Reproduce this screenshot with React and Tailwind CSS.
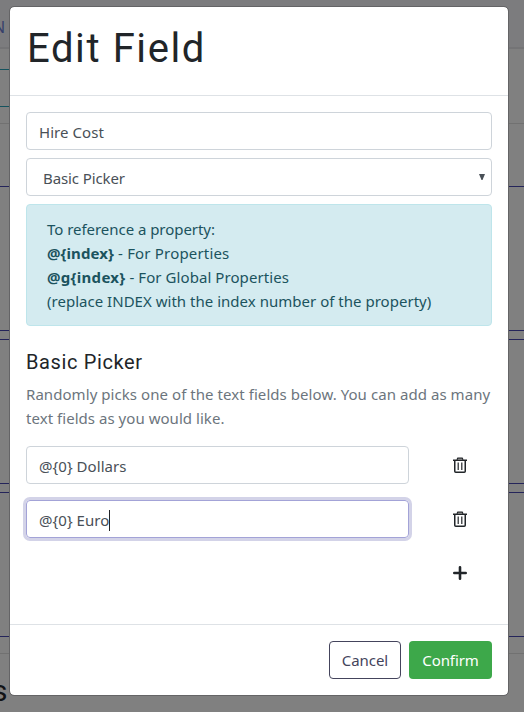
import React from "react";

const body = "font-['Noto_Sans','Open_Sans',sans-serif]";
const head = "font-['Roboto',sans-serif]";

function Rule({ gap, color }) {
  return (
    <>
      <div className={`shrink-0 ${gap}`} />
      <div className={`h-px shrink-0 ${color}`} />
    </>
  );
}

function Backdrop() {
  return (
    <div className="flex h-[712px] w-[524px] flex-col overflow-hidden bg-[#808080]">
      <div className="flex h-[49px] shrink-0 items-start border-b-2 border-[#747476] bg-[#7c7c7e] pt-[18px]">
        <span className={`${body} -ml-[7px] text-[16px] leading-[18px] text-[#36406b]`}>N</span>
      </div>
      <Rule gap="h-[20px]" color="w-[20px] bg-[#15535e]" />
      <Rule gap="h-[36px]" color="w-[20px] bg-[#15535e]" />
      <Rule gap="h-[16px]" color="bg-[#717171]" />
      <Rule gap="h-[62px]" color="bg-[#24245a]" />
      <Rule gap="h-[143px]" color="bg-[#24245a]" />
      <Rule gap="h-[8px]" color="bg-[#24245a]" />
      <Rule gap="h-[143px]" color="bg-[#24245a]" />
      <Rule gap="h-[8px]" color="bg-[#24245a]" />
      <Rule gap="h-[143px]" color="bg-[#24245a]" />
      <Rule gap="h-[16px]" color="bg-[#717171]" />
      <span className={`${head} -ml-[8px] mt-[21px] text-[30px] leading-[32px] text-[#111315]`}>s</span>
    </div>
  );
}

function Trash() {
  return (
    <svg className="h-4 w-[14px]" viewBox="0 0 14 16" fill="none" stroke="#212529">
      <path d="M0 3.25h14" strokeWidth="1.5" />
      <path d="M4 2.8 4.8 1h4.4L10 2.8" fill="#777" strokeWidth="1.2" />
      <path d="M1.75 3v11.2q0 1 1 1h8.5q1 0 1-1V3" strokeWidth="1.5" />
      <path d="M5.2 5.5v7.5M8.8 5.5v7.5" strokeWidth="1.2" />
    </svg>
  );
}

function Plus() {
  return (
    <svg className="h-[14px] w-[14px]" viewBox="0 0 14 14" stroke="#212529" strokeWidth="2.6" strokeLinecap="round">
      <path d="M7 1.3v11.4M1.3 7h11.4" />
    </svg>
  );
}

const field = "flex h-[38px] shrink-0 items-center rounded border pl-3 pt-[2px] text-[15px] leading-6 text-[#495057] whitespace-pre";

export default function App() {
  return (
    <div className="relative h-[712px] w-[524px] overflow-hidden">
      <Backdrop />
      <div className={`${body} absolute left-[9px] top-[6px] flex h-[690px] w-[500px] flex-col rounded-[5px] border border-[#646466] bg-white bg-clip-padding`}>
        <header className="flex h-[89px] shrink-0 items-start border-b border-[#dee2e6] pl-[17px] pt-[18px]">
          <h1 className={`${head} whitespace-nowrap text-[40px] leading-[48px] tracking-[1.6px] text-[#212529]`}>Edit Field</h1>
        </header>
        <main className="flex grow flex-col px-4 pt-4">
          <div className={`${field} border-[#ced4da]`}>
            <span className="tracking-[0.05px]">Hire Cost</span>
          </div>
          <div className={`${field} mt-2 justify-between border-[#ced4da] pr-[6px]`}>
            <span className="ml-1 tracking-[-0.1px]">Basic Picker</span>
            <svg className="-mt-[3px] h-[6px] w-[6px]" viewBox="0 0 6 6" fill="#495057"><path d="M0 0h6L3.5 6h-1z" /></svg>
          </div>
          <div className="mt-2 flex h-[122px] shrink-0 flex-col items-start whitespace-nowrap rounded border border-[#bee5eb] bg-[#d4ebf0] pl-5 pt-[12px] text-[15px] leading-6 text-[#1b535e]">
            <span className="tracking-[-0.04px]">To reference a property:</span>
            <span className="tracking-[0.18px]"><b className="tracking-[0.08px]">@&#123;index&#125;</b> - For Properties</span>
            <span className="tracking-[0.07px]"><b className="tracking-[0.3px]">@g&#123;index&#125;</b> - For Global Properties</span>
            <span className="tracking-[0.02px]">(replace INDEX with the index number of the property)</span>
          </div>
          <h5 className={`${head} mt-6 text-[20px] leading-6 tracking-[0.62px] text-[#212529]`}>Basic Picker</h5>
          <p className="mt-2 flex flex-col whitespace-nowrap text-[15px] leading-6 text-[#6c757d]">
            <span className="tracking-[0.06px]">Randomly picks one of the text fields below. You can add as many</span>
            <span className="tracking-[0.04px]">text fields as you would like.</span>
          </p>
          <div className="mt-4 flex items-center">
            <div className={`${field} w-[383px] border-[#ced4da]`}><span className="tracking-[0.05px]">@&#123;0&#125; Dollars</span></div>
            <div className="flex w-[101px] shrink-0 justify-center"><Trash /></div>
          </div>
          <div className="mt-4 flex items-center">
            <div className={`${field} w-[383px] border-[#a3a3d7] ring-[3px] ring-[#d3d3e8]`}>
              <span className="tracking-[0.05px]">@&#123;0&#125; Euro</span>
              <i className="h-[21px] w-px bg-[#212529]" />
            </div>
            <div className="flex w-[101px] shrink-0 justify-center"><Trash /></div>
          </div>
          <div className="ml-[383px] mt-7 flex w-[101px] justify-center"><Plus /></div>
        </main>
        <footer className="flex h-[71px] shrink-0 items-start justify-end gap-2 border-t border-[#dee2e6] pr-4 pt-4 text-[15px]">
          <button className="h-[38px] w-[72px] rounded border border-[#44445c] leading-6 text-[#44445c]"><span className="tracking-[-0.05px]">Cancel</span></button>
          <button className="h-[38px] w-[83px] rounded bg-[#3da84a] leading-6 text-white"><span className="tracking-[-0.1px]">Confirm</span></button>
        </footer>
      </div>
    </div>
  );
}
